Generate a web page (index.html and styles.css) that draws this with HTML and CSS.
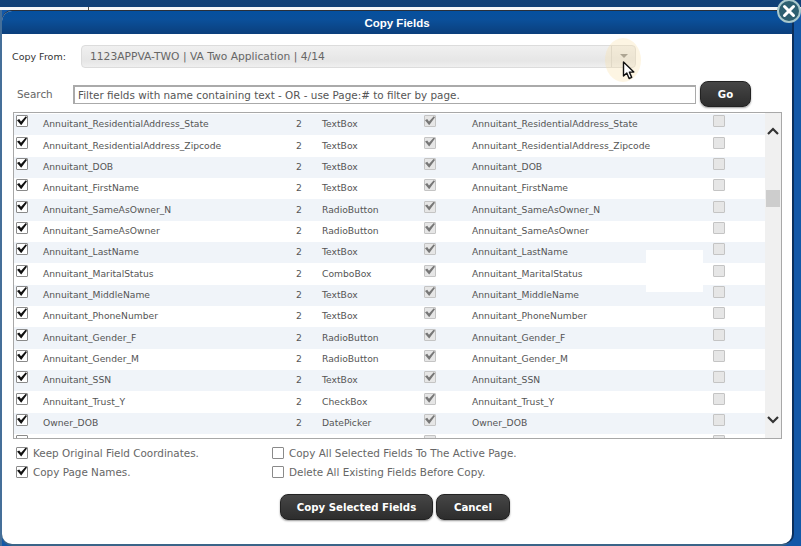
FILE: index.html
```html
<!DOCTYPE html>
<html lang="en">
<head>
    <meta charset="UTF-8">
    <meta name="viewport" content="width=device-width, initial-scale=1.0">
    <title>Copy Fields</title>
    <link rel="stylesheet" href="styles.css">
</head>
<body>
    <div class="page-top"></div>
    <div class="modal">
        <div class="modal-title">Copy Fields</div>
        <button class="close-btn" aria-label="Close">
            <svg width="24" height="24" viewBox="0 0 24 24"><path d="M7.5 7.5l9 9M16.5 7.5l-9 9" stroke="#fff" stroke-width="3" stroke-linecap="round" fill="none"/></svg>
        </button>

        <div class="copy-from">
            <label>Copy From:</label>
            <div class="combo">
                <span class="combo-text">1123APPVA-TWO | VA Two Application | 4/14</span>
                <span class="combo-arrow"></span>
            </div>
        </div>

        <div class="search">
            <label>Search</label>
            <input type="text" value="Filter fields with name containing text - OR - use Page:# to filter by page.">
            <button class="btn btn-go">Go</button>
        </div>

        <div class="grid">
            <div class="rows">
                <div class="row"><input type="checkbox" class="cb" checked><span>Annuitant_ResidentialAddress_State</span><span>2</span><span>TextBox</span><input type="checkbox" class="cb off" checked><span>Annuitant_ResidentialAddress_State</span><input type="checkbox" class="cb off"></div>
                <div class="row"><input type="checkbox" class="cb" checked><span>Annuitant_ResidentialAddress_Zipcode</span><span>2</span><span>TextBox</span><input type="checkbox" class="cb off" checked><span>Annuitant_ResidentialAddress_Zipcode</span><input type="checkbox" class="cb off"></div>
                <div class="row"><input type="checkbox" class="cb" checked><span>Annuitant_DOB</span><span>2</span><span>TextBox</span><input type="checkbox" class="cb off" checked><span>Annuitant_DOB</span><input type="checkbox" class="cb off"></div>
                <div class="row"><input type="checkbox" class="cb" checked><span>Annuitant_FirstName</span><span>2</span><span>TextBox</span><input type="checkbox" class="cb off" checked><span>Annuitant_FirstName</span><input type="checkbox" class="cb off"></div>
                <div class="row"><input type="checkbox" class="cb" checked><span>Annuitant_SameAsOwner_N</span><span>2</span><span>RadioButton</span><input type="checkbox" class="cb off" checked><span>Annuitant_SameAsOwner_N</span><input type="checkbox" class="cb off"></div>
                <div class="row"><input type="checkbox" class="cb" checked><span>Annuitant_SameAsOwner</span><span>2</span><span>RadioButton</span><input type="checkbox" class="cb off" checked><span>Annuitant_SameAsOwner</span><input type="checkbox" class="cb off"></div>
                <div class="row"><input type="checkbox" class="cb" checked><span>Annuitant_LastName</span><span>2</span><span>TextBox</span><input type="checkbox" class="cb off" checked><span>Annuitant_LastName</span><input type="checkbox" class="cb off"></div>
                <div class="row"><input type="checkbox" class="cb" checked><span>Annuitant_MaritalStatus</span><span>2</span><span>ComboBox</span><input type="checkbox" class="cb off" checked><span>Annuitant_MaritalStatus</span><input type="checkbox" class="cb off"></div>
                <div class="row"><input type="checkbox" class="cb" checked><span>Annuitant_MiddleName</span><span>2</span><span>TextBox</span><input type="checkbox" class="cb off" checked><span>Annuitant_MiddleName</span><input type="checkbox" class="cb off"></div>
                <div class="row"><input type="checkbox" class="cb" checked><span>Annuitant_PhoneNumber</span><span>2</span><span>TextBox</span><input type="checkbox" class="cb off" checked><span>Annuitant_PhoneNumber</span><input type="checkbox" class="cb off"></div>
                <div class="row"><input type="checkbox" class="cb" checked><span>Annuitant_Gender_F</span><span>2</span><span>RadioButton</span><input type="checkbox" class="cb off" checked><span>Annuitant_Gender_F</span><input type="checkbox" class="cb off"></div>
                <div class="row"><input type="checkbox" class="cb" checked><span>Annuitant_Gender_M</span><span>2</span><span>RadioButton</span><input type="checkbox" class="cb off" checked><span>Annuitant_Gender_M</span><input type="checkbox" class="cb off"></div>
                <div class="row"><input type="checkbox" class="cb" checked><span>Annuitant_SSN</span><span>2</span><span>TextBox</span><input type="checkbox" class="cb off" checked><span>Annuitant_SSN</span><input type="checkbox" class="cb off"></div>
                <div class="row"><input type="checkbox" class="cb" checked><span>Annuitant_Trust_Y</span><span>2</span><span>CheckBox</span><input type="checkbox" class="cb off" checked><span>Annuitant_Trust_Y</span><input type="checkbox" class="cb off"></div>
                <div class="row"><input type="checkbox" class="cb" checked><span>Owner_DOB</span><span>2</span><span>DatePicker</span><input type="checkbox" class="cb off" checked><span>Owner_DOB</span><input type="checkbox" class="cb off"></div>
                <div class="row"><input type="checkbox" class="cb"><span></span><span></span><span></span><input type="checkbox" class="cb off"><span></span><input type="checkbox" class="cb off"></div>
            </div>
            <div class="scrollbar">
                <svg class="arrow-up" width="14" height="9" viewBox="0 0 14 9"><path d="M2 7l5-5 5 5" stroke="#333" stroke-width="2.2" fill="none"/></svg>
                <div class="thumb"></div>
                <svg class="arrow-down" width="14" height="9" viewBox="0 0 14 9"><path d="M2 2l5 5 5-5" stroke="#333" stroke-width="2.2" fill="none"/></svg>
            </div>
            <div class="white-patch"></div>
        </div>

        <div class="options">
            <div class="opt-col">
                <label class="opt"><input type="checkbox" class="cb" checked>Keep Original Field Coordinates.</label>
                <label class="opt"><input type="checkbox" class="cb" checked>Copy Page Names.</label>
            </div>
            <div class="opt-col">
                <label class="opt"><input type="checkbox" class="cb">Copy All Selected Fields To The Active Page.</label>
                <label class="opt"><input type="checkbox" class="cb">Delete All Existing Fields Before Copy.</label>
            </div>
        </div>

        <div class="actions">
            <button class="btn btn-copy">Copy Selected Fields</button>
            <button class="btn btn-cancel">Cancel</button>
        </div>

        <div class="highlight"></div>
        <svg class="cursor" width="14" height="20" viewBox="0 0 14 20"><path d="M1.5 1v14l3.3-3 2.3 5.5 2.6-1.1-2.3-5.3h4.4z" fill="#fff" stroke="#111" stroke-width="1.4" stroke-linejoin="round"/></svg>
    </div>
</body>
</html>
```

FILE: styles.css
```css
* {
    box-sizing: border-box;
}
body {
    margin: 0;
    height: 546px;
    overflow: hidden;
    background: linear-gradient(90deg, #456f99 0, #456f99 2px, #1358a8 2px);
    font-family: "DejaVu Sans", Verdana, sans-serif;
    font-size: 9.2px;
    color: #555;
}
.page-top {
    position: relative;
    height: 10px;
    background: linear-gradient(#0f4079 0, #0f3f78 7px, #f4f6f9 7px);
}
.page-top::before {
    content: "";
    position: absolute;
    left: 88px;
    top: 7px;
    width: 1px;
    height: 4px;
    background: #555;
}
.modal {
    position: relative;
    margin: 1px 9px 0 2px;
    height: 533px;
    background: #fff;
    border-radius: 10px;
    box-shadow: 2px 0 0 #0b2f5c, 0 -1px 0 #2a2f38, 0 2px 0 #3a6488;
}
.modal-title {
    height: 23px;
    line-height: 24px;
    text-align: center;
    color: #fff;
    font-family: "Liberation Sans", Arial, sans-serif;
    font-size: 11.5px;
    font-weight: bold;
    background: linear-gradient(#05509f, #0b4f99 40%, #0b3f7c);
    border-radius: 10px 10px 0 0;
}
.close-btn {
    position: absolute;
    top: -12px;
    right: -9px;
    width: 24px;
    height: 24px;
    padding: 0;
    border: 2px solid #a9c8cc;
    border-radius: 50%;
    background: #2c5f70;
    display: flex;
    align-items: center;
    justify-content: center;
}
.close-btn svg {
    flex: none;
}
.copy-from {
    display: flex;
    align-items: center;
    margin: 11px 0 0 10px;
}
.copy-from label {
    width: 69px;
    color: #333;
    font-size: 9.5px;
}
.combo {
    width: 555px;
    height: 23px;
    display: flex;
    align-items: center;
    justify-content: space-between;
    border: 1px solid #dcdcdc;
    border-radius: 4px;
    background: linear-gradient(#f0f0f0, #e6e6e6 70%, #efefef);
}
.combo-text {
    padding-left: 8px;
    font-size: 10.7px;
    color: #666;
}
.combo-arrow {
    position: relative;
    width: 24px;
    height: 21px;
    border-left: 1px solid #d4d4d4;
}
.combo-arrow::after {
    content: "";
    position: absolute;
    left: 8px;
    top: 8px;
    border: 4px solid transparent;
    border-top: 4px solid #888;
}
.search {
    display: flex;
    align-items: center;
    margin: 13px 0 0 15px;
}
.search label {
    width: 56px;
    font-size: 10.4px;
    color: #666;
}
.search input {
    width: 623px;
    height: 19px;
    padding: 0 3px;
    border: 1px solid #aaa;
    border-width: 2px 1px 1px 2px;
    font-family: inherit;
    font-size: 10.4px;
    color: #555;
    background: #fff;
}
.btn {
    height: 26px;
    border: 1px solid #222;
    border-radius: 8px;
    background: linear-gradient(#464646, #2d2d2d);
    box-shadow: 0 1px 2px #999;
    color: #fff;
    font-family: inherit;
    font-size: 10.2px;
    font-weight: bold;
    padding: 0;
}
.btn-go {
    width: 51px;
    margin-left: 4px;
}
.grid {
    position: relative;
    display: flex;
    margin: 5px 0 0 11px;
    width: 769px;
    height: 327px;
    border: 1px solid #a8a8a8;
    overflow: hidden;
}
.rows {
    flex: 1;
    padding-top: 1px;
}
.row {
    display: grid;
    grid-template-columns: 28px 253px 26px 101px 49px 240px 12px;
    align-items: center;
    height: 21.35px;
    padding: 0 0 2px 1px;
}
.row:nth-child(odd) {
    background: #f0f4f9;
}
.cb {
    appearance: none;
    position: relative;
    width: 12px;
    height: 12px;
    margin: -5px 0 0 1px;
    border: 1px solid #8a8a8a;
    border-radius: 1px;
    background: #fff;
}
.cb:checked::after {
    content: "";
    position: absolute;
    left: 0;
    top: 0;
    width: 10px;
    height: 9px;
    background: #111;
    clip-path: polygon(0 45%, 22% 32%, 40% 58%, 88% 0, 100% 12%, 42% 100%);
}
.cb.off {
    border-color: #c4c4c4;
    background: #e6e6e6;
}
.cb.off:checked::after {
    background: #777;
}
.scrollbar {
    position: relative;
    width: 16px;
    background: #f0f0f0;
}
.arrow-up,
.arrow-down {
    position: absolute;
    left: 1px;
}
.arrow-up {
    top: 14px;
}
.arrow-down {
    bottom: 14px;
}
.thumb {
    position: absolute;
    top: 77px;
    left: 1px;
    width: 14px;
    height: 17px;
    background: #cdcdcd;
}
.white-patch {
    position: absolute;
    left: 632px;
    top: 137px;
    width: 57px;
    height: 42px;
    background: #fff;
}
.options {
    display: flex;
    margin: 7px 0 0 14px;
}
.opt-col {
    display: flex;
    flex-direction: column;
    gap: 6px;
}
.opt-col:first-child {
    width: 256px;
}
.opt {
    display: flex;
    align-items: center;
    height: 13px;
    font-size: 10.4px;
    color: #666;
}
.opt .cb {
    margin: 0 5px 0 0;
    flex: none;
}
.actions {
    display: flex;
    justify-content: center;
    gap: 3px;
    margin: 16px 0 0 -4px;
}
.btn-copy {
    width: 153px;
}
.btn-cancel {
    width: 74px;
}
.highlight {
    position: absolute;
    left: 603px;
    top: 27px;
    width: 36px;
    height: 44px;
    border-radius: 50%;
    background: rgba(250, 225, 170, .33);
}
.cursor {
    position: absolute;
    left: 620px;
    top: 50px;
}
```
